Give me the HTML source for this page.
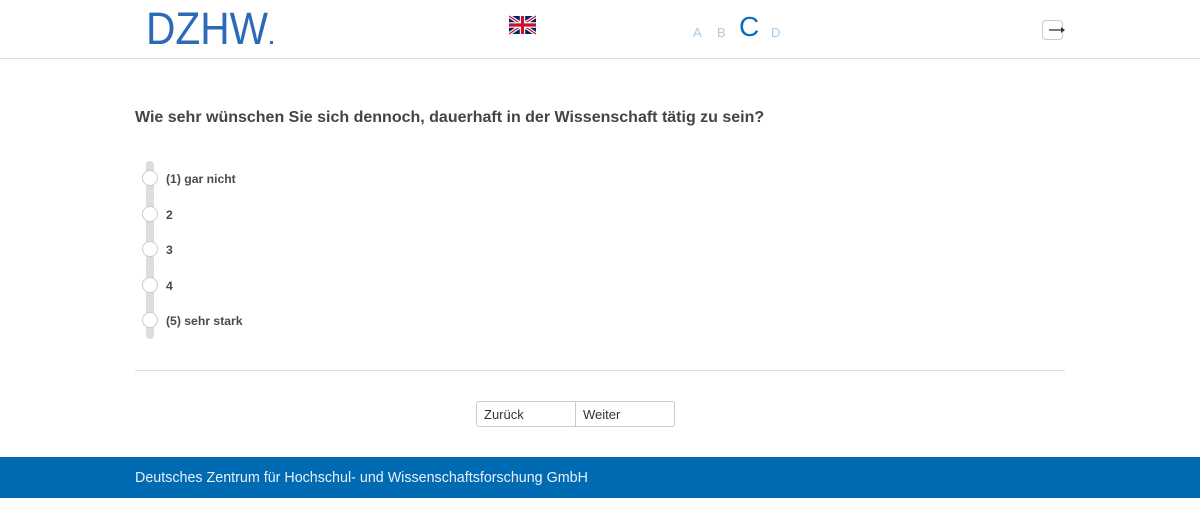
<!DOCTYPE html>
<html><head><meta charset="utf-8"><style>
*{margin:0;padding:0;box-sizing:border-box}
body{width:1200px;height:507px;background:#fff;font-family:"Liberation Sans",sans-serif;position:relative;overflow:hidden}
.hdr{position:absolute;left:0;top:0;width:1200px;height:59px;border-bottom:1px solid #ddd}
.abs{position:absolute}
.q{left:135px;top:109px;font-size:16px;font-weight:bold;color:#444}
.track{left:146px;top:161px;width:8px;height:178px;background:#ddd;border-radius:4px}
.rad{width:16px;height:16px;border-radius:50%;background:#fff;border:1px solid #ccc;left:142px}
.lbl{left:166px;font-size:12.2px;font-weight:bold;color:#4a4a4a}
.sep{left:135px;top:370px;width:930px;height:1px;background:#ddd}
.btn{top:401px;height:26px;border:1px solid #ccc;font-size:13px;color:#333;padding:5px 7px;background:#fff}
.foot{left:0;top:457px;width:1200px;height:41px;background:#006ab3;color:#e8f0f8;font-size:14.3px;padding:13px 135px}
</style></head><body>
<div class="hdr"></div>
<svg class="abs" style="left:144px;top:8px" width="135" height="40"><text x="2" y="36" font-family="Liberation Sans" font-size="45" fill="#2a6ab8" textLength="122" lengthAdjust="spacingAndGlyphs">DZHW</text><rect x="126" y="33" width="3" height="3" fill="#2a6ab8"/></svg>
<svg class="abs" style="left:509px;top:15px" width="27" height="20" viewBox="0 0 60 40"><rect width="60" height="40" fill="#012169"/><path d="M0 0L60 40M60 0L0 40" stroke="#fff" stroke-width="8"/><path d="M0 0L60 40M60 0L0 40" stroke="#c8102e" stroke-width="3"/><path d="M30 0V40M0 20H60" stroke="#fff" stroke-width="12"/><path d="M30 0V40M0 20H60" stroke="#c8102e" stroke-width="7"/></svg>
<div class="abs" style="left:693px;top:25px;font-size:13px;color:#a9cbe8">A</div>
<div class="abs" style="left:717px;top:25px;font-size:13px;color:#a9cbe8">B</div>
<div class="abs" style="left:739px;top:11px;font-size:28px;color:#0a6ebd">C</div>
<div class="abs" style="left:771px;top:25px;font-size:13px;color:#a9cbe8">D</div>
<div class="abs" style="left:1042px;top:20px;width:21px;height:20px;border:1px solid #ccc;border-radius:4px"></div>
<svg class="abs" style="left:1049px;top:25px" width="17" height="10"><path d="M0 5H13" stroke="#333" stroke-width="1.3"/><path d="M12 2L16 5L12 8Z" fill="#333"/></svg>
<div class="abs q">Wie sehr wünschen Sie sich dennoch, dauerhaft in der Wissenschaft tätig zu sein?</div>
<div class="abs track"></div>
<div class="abs rad" style="top:170px"></div><div class="abs lbl" style="top:172px">(1) gar nicht</div>
<div class="abs rad" style="top:206px"></div><div class="abs lbl" style="top:208px">2</div>
<div class="abs rad" style="top:241px"></div><div class="abs lbl" style="top:243px">3</div>
<div class="abs rad" style="top:277px"></div><div class="abs lbl" style="top:279px">4</div>
<div class="abs rad" style="top:312px"></div><div class="abs lbl" style="top:314px">(5) sehr stark</div>
<div class="abs sep"></div>
<div class="abs btn" style="left:476px;width:100px;border-radius:3px 0 0 3px">Zurück</div>
<div class="abs btn" style="left:575px;width:100px;border-radius:0 3px 3px 0">Weiter</div>
<div class="abs foot">Deutsches Zentrum für Hochschul- und Wissenschaftsforschung GmbH</div>
</body></html>
